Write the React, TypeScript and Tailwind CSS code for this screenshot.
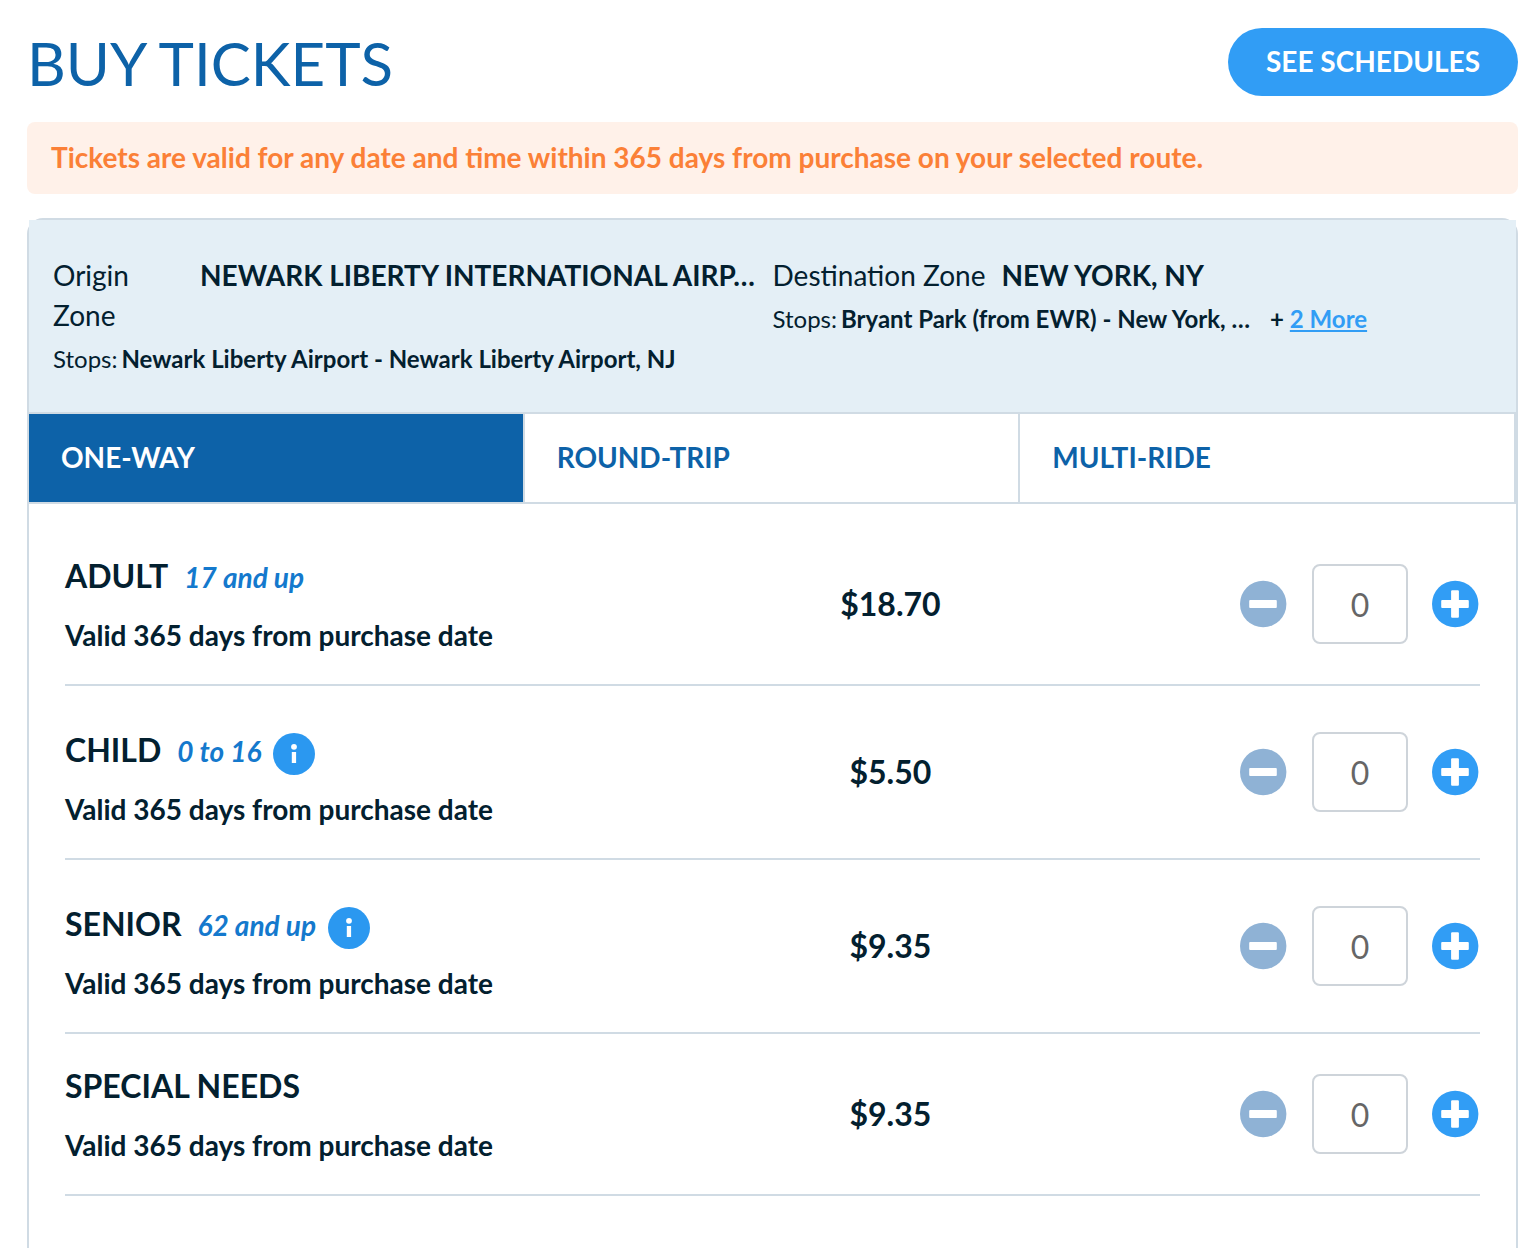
import { useState } from 'react';

interface Fare {
    id: string;
    name: string;
    ages?: string;
    hasInfo?: boolean;
    price: string;
}

const TABS = ['ONE-WAY', 'ROUND-TRIP', 'MULTI-RIDE'];

const FARES: Fare[] = [
    { id: 'adult', name: 'ADULT', ages: '17 and up', price: '$18.70' },
    { id: 'child', name: 'CHILD', ages: '0 to 16', hasInfo: true, price: '$5.50' },
    { id: 'senior', name: 'SENIOR', ages: '62 and up', hasInfo: true, price: '$9.35' },
    { id: 'special', name: 'SPECIAL NEEDS', price: '$9.35' },
];

function InfoIcon() {
    return (
        <svg viewBox="0 0 42 42" className="size-[42px]" aria-hidden="true">
            <circle cx="21" cy="21" r="21" fill="#2b98f0" />
            <circle cx="21" cy="13.8" r="2.9" fill="#fff" />
            <rect x="18.8" y="19" width="4.3" height="11" fill="#fff" />
        </svg>
    );
}

function RoundIcon({ plus = false }: { plus?: boolean }) {
    return (
        <svg viewBox="0 0 48 48" className="size-12" aria-hidden="true">
            <circle cx="23.2" cy="24" r="23.2" fill={plus ? '#319df5' : '#8fb2d5'} />
            <rect x="9.2" y="20.1" width="27.6" height="7.8" rx="1" fill="#fff" />
            {plus && <rect x="19.1" y="10.2" width="7.8" height="27.6" rx="1" fill="#fff" />}
        </svg>
    );
}

function FareRow({ fare }: { fare: Fare }) {
    const [count, setCount] = useState(0);

    return (
        <li className="grid grid-cols-12 items-center border-b-2 border-[#d0dbe4]">
            <div className="col-span-6 pt-8 pb-[29px]">
                <div className={`flex items-end ${fare.hasInfo ? 'h-[52px]' : 'h-10'}`}>
                    <label htmlFor={fare.id} className="text-[32px] leading-10 font-bold">{fare.name}</label>
                    {fare.ages && <em className="ml-4 text-[28px] leading-[38px] font-bold text-[#1479cd]">{fare.ages}</em>}
                    {fare.hasInfo && (
                        <button type="button" aria-label={`${fare.name} fare details`} className="-mb-[5px] ml-3">
                            <InfoIcon />
                        </button>
                    )}
                </div>
                <p className="mt-[19px] text-[28px] leading-10 font-bold">Valid 365 days from purchase date</p>
            </div>
            <div className="col-span-2 text-center text-[32px] leading-10 font-bold">{fare.price}</div>
            <div className="col-span-4 flex items-center justify-end gap-6">
                <button type="button" aria-label={`Remove ${fare.name}`} onClick={() => setCount(Math.max(0, count - 1))}>
                    <RoundIcon />
                </button>
                <input
                    id={fare.id}
                    type="text"
                    inputMode="numeric"
                    value={count}
                    onChange={(e) => setCount(Number(e.target.value) || 0)}
                    className="h-20 w-24 rounded-lg border-2 border-[#ced4da] bg-white text-center text-[32px] text-[#666]"
                />
                <button type="button" aria-label={`Add ${fare.name}`} onClick={() => setCount(count + 1)}>
                    <RoundIcon plus />
                </button>
            </div>
        </li>
    );
}

export default function App() {
    const [activeTab, setActiveTab] = useState('ONE-WAY');

    return (
        <main className="flex min-h-screen flex-col bg-white pt-7 pr-0.5 pl-[27px] font-['Lato',sans-serif] text-[#03202f]">
            {/* Page header */}
            <header className="flex items-center justify-between">
                <h1 className="pt-0.5 text-[60px] leading-[66px] text-[#0d62a8]">BUY TICKETS</h1>
                <button type="button" className="h-[68px] w-[290px] rounded-full bg-[#319df5] pb-0.5 text-[28px] font-bold text-white">
                    SEE SCHEDULES
                </button>
            </header>

            <p className="mt-[26px] rounded-lg bg-[#fff1e9] px-6 pt-[15px] pb-[17px] text-[28px] leading-10 font-bold text-[#fb8037]">
                Tickets are valid for any date and time within 365 days from purchase on your selected route.
            </p>

            <section className="mt-6 grow rounded-t-2xl border-2 border-b-0 border-[#d0dbe4]">
                {/* Route */}
                <div className="grid grid-cols-2 border-b-2 border-[#d0dbe4] bg-[#e4eff6] px-6 pt-[35px] pb-[33px]">
                    <div className="min-w-0">
                        <div className="flex gap-4 text-[28px] leading-10">
                            <span className="w-[131px] shrink-0">Origin Zone</span>
                            <strong className="whitespace-nowrap">NEWARK LIBERTY INTERNATIONAL AIRP…</strong>
                        </div>
                        <div className="mt-1 flex gap-1 text-[24px] leading-10">
                            <span>Stops:</span>
                            <strong>Newark Liberty Airport - Newark Liberty Airport, NJ</strong>
                        </div>
                    </div>
                    <div className="min-w-0">
                        <div className="flex gap-4 text-[28px] leading-10">
                            <span>Destination Zone</span>
                            <strong>NEW YORK, NY</strong>
                        </div>
                        <div className="mt-1 flex gap-1 text-[24px] leading-10">
                            <span>Stops:</span>
                            <strong className="mr-4">Bryant Park (from EWR) - New York, …</strong>
                            <strong>
                                + <a href="#stops" className="text-[#319df5] underline">2 More</a>
                            </strong>
                        </div>
                    </div>
                </div>

                {/* Trip type */}
                <div role="tablist" className="grid grid-cols-3 border-b-2 border-[#d0dbe4]">
                    {TABS.map((tab) => (
                        <button
                            key={tab}
                            type="button"
                            role="tab"
                            aria-selected={tab === activeTab}
                            onClick={() => setActiveTab(tab)}
                            className={`h-[88px] border-r-2 border-[#d0dbe4] px-8 pb-0.5 text-left text-[28px] font-bold ${tab === activeTab ? 'bg-[#0d62a8] text-white' : 'bg-white text-[#0d62a8]'}`}
                        >
                            {tab}
                        </button>
                    ))}
                </div>

                <ul className="px-9 pt-5">
                    {FARES.map((fare) => (
                        <FareRow key={fare.id} fare={fare} />
                    ))}
                </ul>
            </section>
        </main>
    );
}
